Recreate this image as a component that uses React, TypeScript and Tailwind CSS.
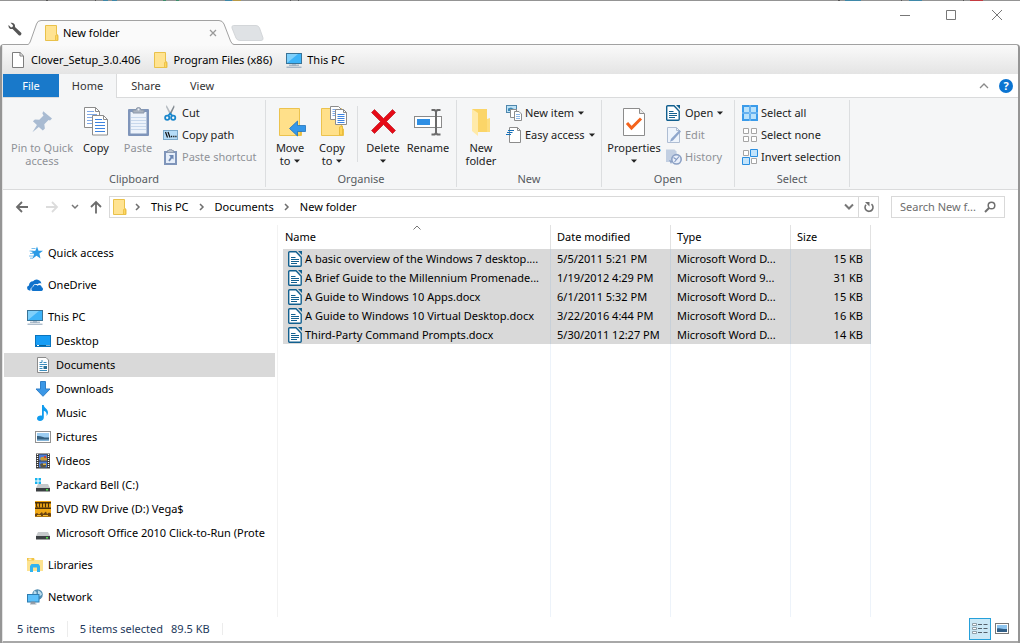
import React from "react";

type IconProps = { className?: string };

/* ---------- shared shapes ---------- */

const FolderIcon = ({ className = "h-4 w-3.5" }: IconProps) => (
  <svg viewBox="0 0 14 16" className={className} aria-hidden="true">
    <path d="M.5.5h11v9l1.500 .8v5.200H.5z" fill="#ffe391" stroke="#e9c14a" />
    <path d="M10.500 15V10.500l2-.6V15" fill="#ffd75e" stroke="#e9bd3f" strokeWidth=".8" />
  </svg>
);

const MonitorIcon = ({ className = "h-4 w-4" }: IconProps) => (
  <svg viewBox="0 0 16 16" className={className} aria-hidden="true">
    <rect x=".5" y="1.500" width="15" height="10" fill="#3db3f8" stroke="#3a7396" />
    <path d="M1 11V2h11z" fill="#7fd0fb" />
    <path d="M6 12h4v1.500H6z" fill="#b9c6d2" />
    <path d="M3 13.200h10M.5 15.200h15" stroke="#8aa0b6" />
  </svg>
);

const WriterIcon = ({ className = "h-4 w-3.5" }: IconProps) => (
  <svg viewBox="0 0 14 16" className={className} aria-hidden="true">
    <path d="M1.700.8h6.300l5.200 5.400v8.100a1 1 0 0 1-1 1H1.700a1 1 0 0 1-1-1V1.800a1 1 0 0 1 1-1z" fill="#fff" stroke="#12608f" strokeWidth="1.400" />
    <path d="M10 0H14v4z" fill="#12608f" />
    <path d="M3 6.500h4.500M3 8.500h8M3 10.500h8M3 12.500h6" stroke="#12608f" />
  </svg>
);

const BlankPage = ({ className = "h-4 w-3" }: IconProps) => (
  <svg viewBox="0 0 12 16" className={className} aria-hidden="true">
    <path d="M.5.5h7.600l3.400 3.400v11.600H.5z" fill="#fff" stroke="#7d7d7d" />
    <path d="M8 .5V4h3.500" fill="none" stroke="#7d7d7d" />
  </svg>
);

const Caret = () => (
  <svg viewBox="0 0 6 4" className="inline-block h-1 w-1.5 shrink-0" aria-hidden="true">
    <path d="M0 .5h6L3 3.700z" fill="#222" />
  </svg>
);

/* ---------- ribbon icons ---------- */

const PinIcon = () => (
  <svg viewBox="0 0 32 32" className="h-8 w-8" aria-hidden="true">
    <path d="M17.200 5.200 26 12.600l-2 1.900-1.500-.6-4.200 4.300.6 4.400-2.100 2-4-3.600-6.400 5.200 4.500-7.100-4-3.800 2-1.900 4.400.3 4.200-4.300-1.100-2z" fill="#a9bbd2" />
  </svg>
);

const CopyIcon = () => (
  <svg viewBox="0 0 32 32" className="h-8 w-8" aria-hidden="true">
    <path d="M4.500 1.500h11l4 4v16h-15z" fill="#fff" stroke="#8c8c8c" />
    <path d="M15.500 1.500v4h4" fill="none" stroke="#8c8c8c" />
    <path d="M7 5.500h7M7 8.500h10M7 11.500h10M7 14.500h10M7 17.500h10" stroke="#7fa9e8" />
    <path d="M12.500 9.500h11l4 4v15.500h-15z" fill="#fff" stroke="#8c8c8c" />
    <path d="M23.500 9.500v4h4" fill="none" stroke="#8c8c8c" />
    <path d="M15 13.500h7M15 16.500h10M15 19.500h10M15 22.500h10M15 25.500h10" stroke="#3d83e0" />
  </svg>
);

const PasteIcon = () => (
  <svg viewBox="0 0 32 32" className="h-8 w-8" aria-hidden="true">
    <rect x="6" y="3" width="21" height="27" rx="1" fill="#7f95ba" />
    <path d="M8.500 6h16v21.500h-16z" fill="#edf3fb" />
    <path d="M9 11.500h15M9 14.500h15M9 17.500h15M9 20.500h15M9 23.500h15" stroke="#c8d8ec" />
    <path d="M11 7V4h3a2.500 2.500 0 0 1 5 0h3v3z" fill="#a9b2bf" stroke="#8b98ab" />
    <circle cx="16.500" cy="3.500" r="1" fill="#eef2f7" />
  </svg>
);

const ScissorsIcon = () => (
  <svg viewBox="0 0 16 16" className="h-4 w-4" aria-hidden="true">
    <path d="M3.500 0l5 9-1.500 1L3 2z" fill="#b3b9bf" />
    <path d="M11 0l.5 2-4 8.500-1.500-1z" fill="#7f878e" />
    <circle cx="4.200" cy="12.800" r="2.100" fill="none" stroke="#1b87cc" strokeWidth="1.800" />
    <circle cx="10.200" cy="12.800" r="2.100" fill="none" stroke="#1b87cc" strokeWidth="1.800" />
    <path d="M5 10.900l2.200-2.400 2.200 2.400" fill="none" stroke="#1b87cc" strokeWidth="1.800" />
  </svg>
);

const CopyPathIcon = () => (
  <svg viewBox="0 0 16 16" className="h-4 w-4" aria-hidden="true">
    <rect x=".5" y="3.500" width="14" height="9" fill="#b5dcf8" stroke="#7ba9cb" />
    <path d="M2.500 5l2 5.500M5 5l2 5.500" stroke="#111" strokeWidth="1.200" />
    <path d="M8 9.500h1.200M10.200 9.500h1.200M12.300 9.500h1.200" stroke="#111" strokeWidth="1.300" />
  </svg>
);

const PasteShortcutIcon = () => (
  <svg viewBox="0 0 16 16" className="h-4 w-4" aria-hidden="true">
    <path d="M1 2h13v14H1z" fill="#7f95ba" />
    <path d="M3 4h9v10H3z" fill="#e6eef9" />
    <path d="M4.500 3.500v-2H6a1.500 1.500 0 0 1 3 0h1.500v2z" fill="#b7c0cd" stroke="#8b98ab" strokeWidth=".8" />
    <path d="M6 6h4.500v4.500L9 9.200 6.700 12.500l-1.400-1L7.600 8z" fill="#6d88b4" />
  </svg>
);

const BigFolder = () => (
  <>
    <path d="M5.500 2.500h20v19l2 1.500v6.500h-22z" fill="#ffe08a" stroke="#ecc34e" />
    <path d="M23.500 29V21l3-1v9z" fill="#ffd55a" stroke="#e9bd3f" />
  </>
);

const MoveToIcon = () => (
  <svg viewBox="0 0 32 32" className="h-8 w-8" aria-hidden="true">
    <BigFolder />
    <path d="M15.500 22.500l8-7.500v4.500h8v6h-8V30z" fill="#3497ea" stroke="#2273bb" strokeWidth=".8" />
  </svg>
);

const CopyToIcon = () => (
  <svg viewBox="0 0 32 32" className="h-8 w-8" aria-hidden="true">
    <BigFolder />
    <path d="M14.500.5h8l3 3v10h-11z" fill="#fff" stroke="#8c8c8c" />
    <path d="M16.500 3.500h5M16.500 5.500h7M16.500 7.500h7M16.500 9.500h7" stroke="#7fa9e8" />
    <path d="M19.500 3.500h8l3 3v12h-11z" fill="#fff" stroke="#8c8c8c" />
    <path d="M27.500 3.500v3h3" fill="none" stroke="#8c8c8c" />
    <path d="M21.500 8.500h7M21.500 10.500h7M21.500 12.500h7M21.500 14.500h7M21.500 16.500h7" stroke="#3d83e0" />
  </svg>
);

const DeleteIcon = () => (
  <svg viewBox="0 0 32 32" className="h-8 w-8" aria-hidden="true">
    <path d="M4.500 6.500l3-3 9 9 9-9 3 3-9 9 9 9-3 3-9-9-9 9-3-3 9-9z" fill="#e60b17" stroke="#b60a12" strokeWidth=".6" />
  </svg>
);

const RenameIcon = () => (
  <svg viewBox="0 0 32 32" className="h-8 w-8" aria-hidden="true">
    <rect x="2.500" y="10.500" width="27" height="11" fill="#fff" stroke="#8a8a8a" />
    <rect x="5" y="13" width="13" height="6" fill="#2f8fe4" />
    <path d="M19.500 4h3.200l1.300 1.500L25.300 4h3.200M24 5v23M19.500 28.500h3.200L24 27l1.300 1.500h3.200" fill="none" stroke="#6b6b6b" strokeWidth="2" />
  </svg>
);

const NewFolderIcon = () => (
  <svg viewBox="0 0 32 32" className="h-8 w-8" aria-hidden="true">
    <path d="M7 3h15v10l3 2v11H13z" fill="#fbd568" />
    <path d="M7 3l6 4v23l-6-5z" fill="#ffeaa9" />
    <path d="M22 13l3-1v14h-3z" fill="#fddd7e" />
  </svg>
);

const NewItemIcon = () => (
  <svg viewBox="0 0 16 16" className="h-4 w-4" aria-hidden="true">
    <rect x=".5" y=".5" width="10" height="7" fill="#bde2f6" stroke="#4f87ad" />
    <path d="M2 6V3.500l3-1 4 2V6z" fill="#3c88b5" />
    <path d="M4.500 4.500h6v8h-6z" fill="#fff" stroke="#8c8c8c" />
    <path d="M8.500 6.500h4.500l2.500 2.500v6.500h-7z" fill="#fff" stroke="#8c8c8c" />
    <path d="M10 9.500h4M10 11.500h4M10 13.500h4" stroke="#8db7e6" />
  </svg>
);

const EasyAccessIcon = () => (
  <svg viewBox="0 0 16 16" className="h-4 w-4" aria-hidden="true">
    <path d="M3.500.5h8l3 3v12h-11z" fill="#fff" stroke="#8c8c8c" />
    <path d="M11.500.5v3h3" fill="none" stroke="#8c8c8c" />
    <path d="M2 3.500h6M1 5.500h5.500M0 7.500h5" stroke="#1670b8" strokeWidth="1.100" />
  </svg>
);

const PropertiesIcon = () => (
  <svg viewBox="0 0 32 32" className="h-8 w-8" aria-hidden="true">
    <path d="M5.500 2.500h16l5 5v22h-21z" fill="#fff" stroke="#8c8c8c" />
    <path d="M21.500 2.500v5h5" fill="#e8e8e8" stroke="#8c8c8c" />
    <path d="M9 17l4.500 5L23 12.500" fill="none" stroke="#f4631c" strokeWidth="3" />
  </svg>
);

const EditIcon = () => (
  <svg viewBox="0 0 16 16" className="h-4 w-4" aria-hidden="true">
    <path d="M1.500.5h9l3 3v12h-12z" fill="#eef4fc" stroke="#aebdd3" />
    <path d="M10.500.5v3h3" fill="none" stroke="#aebdd3" />
    <path d="M13.500 3l1.500 1.500-8 9-3 1.200 1.100-3z" fill="#8ea6cc" />
  </svg>
);

const HistoryIcon = () => (
  <svg viewBox="0 0 16 16" className="h-4 w-4" aria-hidden="true">
    <path d="M0 .5h8.500l2 2v10.500H0z" fill="#c2cfe2" />
    <circle cx="10.500" cy="10.300" r="4.700" fill="#e9effa" stroke="#8ba0c4" strokeWidth="1.600" />
    <path d="M7.500 8.500l3 2 2.500-3M10.500 10.500l-2 2.500" fill="none" stroke="#8098c0" strokeWidth="1.100" />
    <path d="M3 11l3.500 1-1.500 3z" fill="#8ba0c4" />
  </svg>
);

const SelectAllIcon = () => (
  <svg viewBox="0 0 16 16" className="h-4 w-4" aria-hidden="true">
    <rect width="16" height="16" fill="#3a9bea" />
    <path d="M2 2h5v5H2zM9 2h5v5H9zM2 9h5v5H2zM9 9h5v5H9z" fill="#b9e2fb" />
    <path d="M8 0v16M0 8h16" stroke="#e8f5fe" strokeWidth=".5" />
  </svg>
);
const SelectNoneIcon = () => (
  <svg viewBox="0 0 16 16" className="h-4 w-4" aria-hidden="true">
    <path d="M1.500 1.500h5v5h-5zM9.500 1.500h5v5h-5zM1.500 9.500h5v5h-5zM9.500 9.500h5v5h-5z" fill="#fff" stroke="#a5a5a5" />
  </svg>
);
const InvertIcon = () => (
  <svg viewBox="0 0 16 16" className="h-4 w-4" aria-hidden="true">
    <path d="M1.500 1.500h5v5h-5zM9.500 9.500h5v5h-5z" fill="#fff" stroke="#a5a5a5" />
    <path d="M8.500.5h7v7h-7zM.5 8.500h7v7h-7z" fill="#c3e4fb" stroke="#2b8fe0" />
  </svg>
);

/* ---------- sidebar icons ---------- */

const QuickIcon = () => (
  <svg viewBox="0 0 16 16" className="h-4 w-4" aria-hidden="true">
    <path d="M10 1.500l1.500 4.200 4.500.1-3.600 2.700L13.500 13.500 9.500 10.800 5.500 13.800 7 9 4 6.200l4.400-.4z" fill="#2b9be6" />
    <path d="M4.500 3.500h4M2.500 6h4M3 8.500h4M2 11h4M3 13.200h3" stroke="#69b7ea" strokeWidth=".9" />
  </svg>
);
const OneDriveIcon = () => (
  <svg viewBox="0 0 16 16" className="h-4 w-4" aria-hidden="true">
    <path d="M3.600 13.500H2.400A2.600 2.600 0 0 1 2 8.400a4 4 0 0 1 4-4.200 5 5 0 0 1 8.500 2.300c-1.500-.6-3-.3-4 .8-2.200-1-4.700.2-5 2.600-1.700.4-2.400 2.100-1.900 3.600z" fill="#0f72cc" />
    <path d="M6.500 14a2 2 0 0 1-.3-4C6.400 8 9 7 10.500 8.700c1.500-1.600 4.100-.7 4.200 1.500 1.800.5 1.700 3.300-.2 3.800z" fill="#0f72cc" />
  </svg>
);
const DesktopIcon = () => (
  <svg viewBox="0 0 16 16" className="h-4 w-4" aria-hidden="true">
    <rect x=".5" y="2.500" width="15" height="11" fill="#179df5" stroke="#0a74bd" />
    <path d="M1 12.500h14" stroke="#066097" />
    <path d="M2 12.500h2M11.500 12.500h1M13.500 12.500h1" stroke="#fff" />
  </svg>
);
const DocumentsIcon = () => (
  <svg viewBox="0 0 16 16" className="h-4 w-4" aria-hidden="true">
    <path d="M2.500.5h8.500l2.500 2.500v12.500h-11z" fill="#fff" stroke="#8b8b8b" />
    <path d="M4.500 5.500h2.500V3M8.500 5.500h3M4.500 7.500h7.500M4.500 9.500h3M4.500 11.500h3M4.500 13.500h7.500" fill="none" stroke="#3c8dbd" />
    <path d="M8.500 9h3.500v3H8.500z" fill="#2b6f95" />
  </svg>
);
const DownloadsIcon = () => (
  <svg viewBox="0 0 16 16" className="h-4 w-4" aria-hidden="true">
    <path d="M5.500.5h5v7.500H15L8 15.300 1 8h4.500z" fill="#3b97e6" stroke="#2f7fc8" />
  </svg>
);
const MusicIcon = () => (
  <svg viewBox="0 0 16 16" className="h-4 w-4" aria-hidden="true">
    <path d="M7 0h1.700c.3 3 4.300 3.600 4.300 7.600 0 1.600-.8 2.700-1.500 3.400.6-2.500-.3-4.400-2.700-5.300V12.500c0 2-1.700 3.500-3.800 3.500C3.300 16 2 15 2 13.500 2 11.500 4.500 10 7 10.700z" fill="#109bee" />
  </svg>
);
const PicturesIcon = () => (
  <svg viewBox="0 0 16 16" className="h-4 w-4" aria-hidden="true">
    <rect x=".5" y="2.500" width="15" height="11" fill="#fff" stroke="#929292" />
    <path d="M2 4h12v8H2z" fill="#9ccdf2" />
    <path d="M2 7c4-.5 6 2 12 1.500V11H2z" fill="#356080" />
    <path d="M2 10.500h12V12H2z" fill="#86b6da" />
  </svg>
);
const VideosIcon = () => (
  <svg viewBox="0 0 16 16" className="h-4 w-4" aria-hidden="true">
    <rect x="1" y=".5" width="14" height="15" fill="#3b3b3b" />
    <path d="M2.500 1v14M13.500 1v14" stroke="#fff" strokeWidth="1.300" strokeDasharray="1 1" />
    <path d="M4 1.500h8v6H4zM4 8.500h8v6H4z" fill="#4a7cd6" />
    <path d="M5 5.500l1.500-1.500h4l1.500 1v2.500H6z" fill="#c79b36" />
    <path d="M5 11.500l2-1.500 2 1.500 2-1.500v3l-1 1.500H6z" fill="#5c5540" />
    <path d="M9 3h2v2H9z" fill="#c8443c" />
    <path d="M8 10.500h3v1.500H8z" fill="#e5b53c" />
  </svg>
);
const Drive = ({ windows = false }: { windows?: boolean }) => (
  <svg viewBox="0 0 16 16" className="h-4 w-4" aria-hidden="true">
    <path d="M3 7h10l2 4H1z" fill="#c6c9cb" />
    <path d="M1 11h14v3.500H1z" fill="#3c4043" />
    <path d="M11 12.700h2" stroke="#52e04c" strokeWidth="1.500" />
    {windows && <path d="M0 1h2.500v2.500H0zM3.500 1H6v2.500H3.500zM0 4.500h2.500V7H0zM3.500 4.500H6V7H3.500z" fill="#19b4ee" />}
  </svg>
);
const WindowsDriveIcon = () => <Drive windows />;
const VegasIcon = () => (
  <svg viewBox="0 0 16 16" className="h-4 w-4" aria-hidden="true">
    <rect width="16" height="16" fill="#f0a816" />
    <path d="M0 1h16v1.500H0zM0 6.500h16V8H0z" fill="#4a2f08" />
    <path d="M1.500 2v3l.8 1.500M4.500 2v4.500M7.500 2v4.500M10.500 2v4.500M13.500 2v4.500" stroke="#4a2f08" strokeWidth="1.200" />
    <path d="M0 13l2-1 2 1.500 3-2.500 1 2 3-2.500 1 2.500 2-1.500 2 1v3H0z" fill="#6b4310" />
    <path d="M2 14.500h4M8 14.500h5" stroke="#f6bd2c" />
  </svg>
);
const LibrariesIcon = () => (
  <svg viewBox="0 0 16 16" className="h-4 w-4" aria-hidden="true">
    <path d="M0 1h7l1.500 2H16v11H0z" fill="#fde391" />
    <path d="M0 1h7v2.500H0z" fill="#f2c443" />
    <path d="M1.500 2.200h3" stroke="#fff" />
    <path d="M3 15V9l1.500-2h7L13 9v6h-3v-4.500H6V15z" fill="#31b3f0" />
  </svg>
);
const NetworkIcon = () => (
  <svg viewBox="0 0 16 16" className="h-4 w-4" aria-hidden="true">
    <circle cx="10.500" cy="5.500" r="5.300" fill="#538fb3" />
    <path d="M7 2c2 0 3 1 2.500 3S8 8 6 7zM11 1.500c2 .5 3.500 2 4 4l-2.500 2L11 5z" fill="#b9ddef" />
    <rect x=".5" y="5.500" width="11.500" height="7.500" fill="#5cc0fa" stroke="#2d7cb0" />
    <path d="M4 13h4v1.500H4zM3 15h6.500" stroke="#8f9aa5" fill="#8f9aa5" strokeWidth=".8" />
  </svg>
);

/* ---------- ribbon parts ---------- */

function LargeButton({ icon, lines, caret, width, disabled }: { icon: React.ReactNode; lines: string[]; caret?: boolean; width: string; disabled?: boolean }) {
  const last = lines.length - 1;
  const ownRow = caret && lines.length === 1;
  return (
    <button type="button" disabled={disabled} className={`flex shrink-0 flex-col items-center pt-1 leading-[13px] ${width} ${disabled ? "text-[#8f9298]" : "text-[#222]"}`}>
      {icon}
      <span className="mt-[3px] flex flex-col items-center whitespace-nowrap">
        {lines.map((line, i) => (
          <span key={line} className="flex items-center gap-1">
            {line}
            {caret && !ownRow && i === last && <Caret />}
          </span>
        ))}
        {ownRow && <span className="flex h-[13px] items-center"><Caret /></span>}
      </span>
    </button>
  );
}

function SmallButton({ icon, label, caret, disabled }: { icon: React.ReactNode; label: string; caret?: boolean; disabled?: boolean }) {
  return (
    <button type="button" disabled={disabled} className={`flex h-[22px] items-center whitespace-nowrap ${disabled ? "text-[#8f9298]" : "text-[#222]"}`}>
      <span className="flex w-[19px] shrink-0">{icon}</span>
      <span className="mr-1">{label}</span>
      {caret && <Caret />}
    </button>
  );
}

function Group({ label, width, pad, children }: { label: string; width: string; pad: string; children: React.ReactNode }) {
  return (
    <section aria-label={label} className={`mt-0.5 mb-0.5 flex shrink-0 flex-col border-r border-[#dcdee0] ${width}`}>
      <div className={`flex h-[70px] items-start pt-0.5 ${pad}`}>{children}</div>
      <h2 className="mt-0.5 text-center leading-[17px] text-[#555a60]">{label}</h2>
    </section>
  );
}

/* ---------- data ---------- */

const places: { label: string; icon: React.FC; child?: boolean; gap?: boolean; selected?: boolean }[] = [
  { label: "Quick access", icon: QuickIcon },
  { label: "OneDrive", icon: OneDriveIcon, gap: true },
  { label: "This PC", icon: MonitorIcon, gap: true },
  { label: "Desktop", icon: DesktopIcon, child: true },
  { label: "Documents", icon: DocumentsIcon, child: true, selected: true },
  { label: "Downloads", icon: DownloadsIcon, child: true },
  { label: "Music", icon: MusicIcon, child: true },
  { label: "Pictures", icon: PicturesIcon, child: true },
  { label: "Videos", icon: VideosIcon, child: true },
  { label: "Packard Bell (C:)", icon: WindowsDriveIcon, child: true },
  { label: "DVD RW Drive (D:) Vega$", icon: VegasIcon, child: true },
  { label: "Microsoft Office 2010 Click-to-Run (Prote", icon: () => <Drive />, child: true },
  { label: "Libraries", icon: LibrariesIcon, gap: true },
  { label: "Network", icon: NetworkIcon, gap: true },
];

const files = [
  ["A basic overview of the Windows 7 desktop....", "5/5/2011 5:21 PM", "Microsoft Word D...", "15 KB"],
  ["A Brief Guide to the Millennium Promenade...", "1/19/2012 4:29 PM", "Microsoft Word 9...", "31 KB"],
  ["A Guide to Windows 10 Apps.docx", "6/1/2011 5:32 PM", "Microsoft Word D...", "15 KB"],
  ["A Guide to Windows 10 Virtual Desktop.docx", "3/22/2016 4:44 PM", "Microsoft Word D...", "16 KB"],
  ["Third-Party Command Prompts.docx", "5/30/2011 12:27 PM", "Microsoft Word D...", "14 KB"],
];

const Chevron = () => (
  <svg viewBox="0 0 6 8" className="h-2 w-1.5 shrink-0" aria-hidden="true">
    <path d="M1 1l3 3-3 3" fill="none" stroke="#6f6f6f" strokeWidth="1.500" />
  </svg>
);

/* ---------- page sections ---------- */

const TitleBar = () => (
  <header className="relative z-10 -mb-px flex h-[45px] items-end pl-2">
    <svg viewBox="0 0 1020 1" preserveAspectRatio="none" className="absolute inset-x-0 top-0 h-px w-full" aria-hidden="true">
      <rect width="1020" height="1" fill="#949494" />
      <path d="M46 0h2v1h-2zM95 0h1v1h-1zM290 0h1v1h-1zM298 0h1v1h-1zM838 0h2v1h-2zM901 0h1v1h-1zM963 0h1v1h-1z" fill="#555" />
      <path d="M103 0h5v1h-5zM112 0h5v1h-5zM225 0h7v1h-7zM845 0h16v1h-16zM909 0h13v1h-13z" fill="#3f88a8" />
      <path d="M163 0h3v1h-3zM176 0h3v1h-3z" fill="#3d8f6c" />
      <path d="M233 0h8v1h-8z" fill="#b99a45" />
      <path d="M970 0h13v1h-13z" fill="#c43a40" />
    </svg>
    <button type="button" aria-label="Options" className="mb-[9px]">
      <svg viewBox="0 0 14 14" className="h-3.5 w-3.5" aria-hidden="true">
        <path d="M2.500.8 5 3.200 4.600 5 3 5.400.6 3C0 5.500 2 7.600 4.600 7L10.500 12.900a1.600 1.600 0 0 0 2.400-2.300L7 5C7.600 2.200 5.200 0 2.500.8z" fill="#555" />
      </svg>
    </button>
    <div className="relative ml-2 flex h-[25px] w-[204px] items-center pr-[17px] pl-[15px]">
      <svg viewBox="0 0 204 25" preserveAspectRatio="none" className="absolute inset-0 h-full w-full overflow-visible" aria-hidden="true">
        <path d="M-2 24.500Q-.5 24 .5 21L6.500 4Q7.500 .5 11 .5H189Q192.500 .5 194 4L200.500 21Q202 24.500 204 24.500V25H-2z" fill="#fafafa" />
        <path d="M-2 24.500Q-.5 24 .5 21L6.500 4Q7.500 .5 11 .5H189Q192.500 .5 194 4L200.500 21Q202 24.500 204 24.500" fill="none" stroke="#a2a2a2" />
      </svg>
      <span className="relative flex flex-1 items-center text-black">
        <FolderIcon />
        <span className="ml-1 flex-1">New folder</span>
        <button type="button" aria-label="Close tab">
          <svg viewBox="0 0 8 8" className="h-2 w-2" aria-hidden="true"><path d="M1 1l6 6M7 1L1 7" stroke="#9a9a9a" strokeWidth="1.300" /></svg>
        </button>
      </span>
    </div>
    <button type="button" aria-label="New tab" className="mb-1 -ml-[3px]">
      <svg viewBox="0 0 33 16" className="h-4 w-[33px]" aria-hidden="true">
        <path d="M2.500.5H25Q27.500.5 28.500 3L32 13Q32.500 15.500 30 15.500H9Q6 15.500 5 13L1 3Q.5.500 2.500.5z" fill="#dfe2e5" stroke="#d3d6d9" />
      </svg>
    </button>
    <div className="ml-auto flex items-center gap-[34px] self-start pt-[9px] pr-[17px]">
      <button type="button" aria-label="Minimise" className="h-3 w-3"><svg viewBox="0 0 12 12" aria-hidden="true"><path d="M1 6.500h10" stroke="#777" /></svg></button>
      <button type="button" aria-label="Maximise" className="h-3 w-3"><svg viewBox="0 0 12 12" aria-hidden="true"><path d="M1.500 1.500h9v9h-9z" fill="none" stroke="#777" /></svg></button>
      <button type="button" aria-label="Close" className="h-3 w-3"><svg viewBox="0 0 12 12" aria-hidden="true"><path d="M1 1l10 10M11 1L1 11" stroke="#777" /></svg></button>
    </div>
  </header>
);

const Ribbon = () => (
  <>
    <nav aria-label="Ribbon tabs" className="flex h-6 items-stretch border-b border-[#dadbdc] bg-white text-[#333]">
      <button type="button" className="w-14 bg-[#1979ca] text-white">File</button>
      <button type="button" className="-mb-px w-[58px] border-r border-[#dadbdc] bg-[#f5f6f7]">Home</button>
      <button type="button" className="w-[58px]">Share</button>
      <button type="button" className="w-[54px]">View</button>
      <div className="ml-auto flex items-center gap-2.5 pr-[5px]">
        <button type="button" aria-label="Collapse ribbon">
          <svg viewBox="0 0 10 6" className="h-1.5 w-2.5" aria-hidden="true"><path d="M1 5l4-4 4 4" fill="none" stroke="#8a8a8a" strokeWidth="1.300" /></svg>
        </button>
        <button type="button" aria-label="Help" className="flex h-3.5 w-3.5 items-center justify-center rounded-full bg-[#0b74d1] leading-none font-bold text-white">?</button>
      </div>
    </nav>
    <div className="flex h-[92px] overflow-hidden border-b border-[#dadbdc] bg-[#f5f6f7]">
      <Group label="Clipboard" width="w-[263px]" pad="pl-1.5">
        <LargeButton icon={<PinIcon />} lines={["Pin to Quick", "access"]} width="w-[66px]" disabled />
        <LargeButton icon={<CopyIcon />} lines={["Copy"]} width="w-[42px]" />
        <LargeButton icon={<PasteIcon />} lines={["Paste"]} width="w-[42px]" disabled />
        <div className="pl-1">
          <SmallButton icon={<ScissorsIcon />} label="Cut" />
          <SmallButton icon={<CopyPathIcon />} label="Copy path" />
          <SmallButton icon={<PasteShortcutIcon />} label="Paste shortcut" disabled />
        </div>
      </Group>
      <Group label="Organise" width="w-[191px]" pad="pl-[3px]">
        <LargeButton icon={<MoveToIcon />} lines={["Move", "to"]} caret width="w-[42px]" />
        <LargeButton icon={<CopyToIcon />} lines={["Copy", "to"]} caret width="w-[42px]" />
        <div className="mx-1 mt-1 h-14 border-l border-[#dcdee0]" />
        <LargeButton icon={<DeleteIcon />} lines={["Delete"]} caret width="w-[42px]" />
        <LargeButton icon={<RenameIcon />} lines={["Rename"]} width="w-[48px]" />
      </Group>
      <Group label="New" width="w-[145px]" pad="pl-[3px]">
        <LargeButton icon={<NewFolderIcon />} lines={["New", "folder"]} width="w-[42px]" />
        <div className="pl-1">
          <SmallButton icon={<NewItemIcon />} label="New item" caret />
          <SmallButton icon={<EasyAccessIcon />} label="Easy access" caret />
        </div>
      </Group>
      <Group label="Open" width="w-[133px]" pad="pl-1">
        <LargeButton icon={<PropertiesIcon />} lines={["Properties"]} caret width="w-[56px]" />
        <div className="pl-1">
          <SmallButton icon={<WriterIcon />} label="Open" caret />
          <SmallButton icon={<EditIcon />} label="Edit" disabled />
          <SmallButton icon={<HistoryIcon />} label="History" disabled />
        </div>
      </Group>
      <Group label="Select" width="w-[115px]" pad="pl-[7px]">
        <div>
          <SmallButton icon={<SelectAllIcon />} label="Select all" />
          <SmallButton icon={<SelectNoneIcon />} label="Select none" />
          <SmallButton icon={<InvertIcon />} label="Invert selection" />
        </div>
      </Group>
    </div>
  </>
);

const AddressBar = () => (
  <div className="flex items-center pt-1.5 pr-[13px] pl-3 text-black">
    <button type="button" aria-label="Back"><svg viewBox="0 0 14 14" className="h-3.5 w-3.5" aria-hidden="true"><path d="M13 7H2M7 2L2 7l5 5" fill="none" stroke="#6c6c6c" strokeWidth="1.800" /></svg></button>
    <button type="button" aria-label="Forward" className="ml-4"><svg viewBox="0 0 14 14" className="h-3.5 w-3.5" aria-hidden="true"><path d="M1 7h11M7 2l5 5-5 5" fill="none" stroke="#dcdcdc" strokeWidth="1.800" /></svg></button>
    <button type="button" aria-label="Recent locations" className="ml-3"><svg viewBox="0 0 8 6" className="h-1.5 w-2" aria-hidden="true"><path d="M1 1l3 3 3-3" fill="none" stroke="#777" strokeWidth="1.500" /></svg></button>
    <button type="button" aria-label="Up" className="ml-2.5"><svg viewBox="0 0 14 14" className="h-3.5 w-3.5" aria-hidden="true"><path d="M7 13.500V2M2 7l5-5 5 5" fill="none" stroke="#6c6c6c" strokeWidth="1.800" /></svg></button>
    <nav aria-label="Breadcrumb" className="ml-1.5 flex h-[22px] flex-1 items-center border border-[#d9d9d9] pl-[3px]">
      <FolderIcon />
      <span className="ml-2"><Chevron /></span>
      <a href="#this-pc" className="mx-2.5">This PC</a>
      <Chevron />
      <a href="#documents" className="mx-2.5">Documents</a>
      <Chevron />
      <a href="#new-folder" className="mx-2.5">New folder</a>
      <button type="button" aria-label="Previous locations" className="mr-1 ml-auto"><svg viewBox="0 0 10 8" className="h-2 w-2.5" aria-hidden="true"><path d="M1 1.500l4 4 4-4" fill="none" stroke="#777" strokeWidth="2" /></svg></button>
      <button type="button" aria-label="Refresh" className="flex h-full w-5 items-center justify-center border-l border-[#d9d9d9]">
        <svg viewBox="0 0 12 12" className="h-3 w-3" aria-hidden="true"><path d="M8.500 3.200a4 4 0 1 1-5.500.5" fill="none" stroke="#707070" strokeWidth="1.600" /><path d="M2 1h4.500v4.500z" fill="#707070" /></svg>
      </button>
    </nav>
    <label className="ml-3 flex h-[22px] w-[114px] items-center border border-[#d9d9d9] pr-2 pl-2">
      <input aria-label="Search New folder" placeholder="Search New f..." className="w-0 flex-1 bg-transparent outline-none placeholder:text-[#6d6d6d]" />
      <svg viewBox="0 0 12 12" className="h-3 w-3 shrink-0" aria-hidden="true"><circle cx="7.500" cy="4.500" r="3.300" fill="none" stroke="#6f6f6f" strokeWidth="1.500" /><path d="M5 7L1 11" stroke="#6f6f6f" strokeWidth="2" /></svg>
    </label>
  </div>
);

const Sidebar = () => (
  <nav aria-label="Folders" className="w-[275px] shrink-0 border-r border-[#f2f2f2] pt-4 pr-0.5 pl-px">
    <ul>
      {places.map(({ label, icon: Icon, child, gap, selected }) => (
        <li key={label} className={gap ? "mt-2" : ""}>
          <a href="#place" className={`flex h-6 items-center overflow-hidden whitespace-nowrap text-black ${child ? "pl-[31px]" : "pl-[23px]"} ${selected ? "bg-[#d9d9d9]" : ""}`}>
            <span className="mr-[5px] shrink-0"><Icon /></span>
            {label}
          </a>
        </li>
      ))}
    </ul>
  </nav>
);

const cellLine = "border-r border-[#edf3fa]";
const FileList = () => (
  <main className="flex min-w-0 flex-1 pl-[5px]">
    <table className="w-[588px] table-fixed border-separate border-spacing-0 text-left whitespace-nowrap text-black">
      <colgroup>
        <col className="w-[268px]" />
        <col className="w-[120px]" />
        <col className="w-[120px]" />
        <col className="w-[80px]" />
      </colgroup>
      <thead>
        <tr className="h-6">
          <th className="relative border-r border-[#e2e2e2] pl-0.5 font-normal" aria-sort="ascending">
            Name
            <svg viewBox="0 0 8 5" className="absolute top-0 left-1/2 h-[5px] w-2 -translate-x-1/2" aria-hidden="true"><path d="M.5 4.500L4 1l3.500 3.500" fill="none" stroke="#777" /></svg>
          </th>
          <th className="border-r border-[#e2e2e2] pl-1.5 font-normal">Date modified</th>
          <th className="border-r border-[#e2e2e2] pl-1.5 font-normal">Type</th>
          <th className="border-r border-[#e2e2e2] pl-1.5 font-normal">Size</th>
        </tr>
      </thead>
      <tbody>
        {files.map(([name, date, type, size]) => (
          <tr key={name} className="h-[19px] bg-[#d9d9d9]">
            <td className="overflow-hidden border-r border-[#c8d0d8] pl-[5px]">
              <span className="flex items-center gap-[3px]"><WriterIcon className="h-4 w-3.5 shrink-0" />{name}</span>
            </td>
            <td className="overflow-hidden border-r border-[#c8d0d8] pl-1.5">{date}</td>
            <td className="overflow-hidden border-r border-[#c8d0d8] pl-1.5">{type}</td>
            <td className="border-r border-[#c8d0d8] pr-[7px] text-right">{size}</td>
          </tr>
        ))}
        <tr aria-hidden="true">
          <td className={cellLine} /><td className={cellLine} /><td className={cellLine} /><td className={cellLine} />
        </tr>
      </tbody>
    </table>
  </main>
);

const StatusBar = () => (
  <footer className="flex h-6 items-center pr-2 pl-3.5 text-[#1e395b]">
    <span>5 items</span>
    <span className="ml-3 flex items-center border-l border-[#ececec] pl-3">5 items selected<span className="ml-2">89.5 KB</span></span>
    <span className="ml-3 h-3 border-l border-[#ececec]" />
    <div className="ml-auto flex items-center gap-1">
      <button type="button" aria-label="Details view" className="flex h-[22px] w-[22px] items-center justify-center border border-[#26a0da] bg-[#cbe8f6]">
        <svg viewBox="0 0 16 14" className="h-3.5 w-4" aria-hidden="true">
          <path d="M.5 1.500h4v2h-4zM.5 5.500h4v2h-4zM.5 9.500h4v2h-4z" fill="#fff" stroke="#7b8a96" strokeWidth=".8" />
          <path d="M6 2.500h4M11.500 2.500h4M6 6.500h4M11.500 6.500h4M6 10.500h4M11.500 10.500h4" stroke="#55616b" />
        </svg>
      </button>
      <button type="button" aria-label="Thumbnail view" className="mr-px">
        <svg viewBox="0 0 14 12" className="h-3 w-3.5" aria-hidden="true">
          <rect x=".5" y=".5" width="13" height="10" fill="#fff" stroke="#777" />
          <path d="M2 2h10v7H2z" fill="#8dc4ee" /><path d="M2 5.500c3-1 6 1 10 .5v3H2z" fill="#2f5d86" />
        </svg>
      </button>
    </div>
  </footer>
);

export default function App() {
  return (
    <div className="flex min-h-screen flex-col bg-white font-['Noto_Sans','Open_Sans',sans-serif] text-[11px] leading-4">
      <TitleBar />
      <div className="flex flex-1 flex-col rounded-t-[4px] border-t border-r-2 border-l-2 border-t-[#a2a2a2] border-r-[#959595] border-l-[#959595]">
        <div className="flex flex-1 flex-col border-b-2 border-l border-b-[#a8a8a8] border-l-[#e4e4e4]">
          <nav aria-label="Bookmarks" className="flex h-[29px] items-center rounded-tr-[4px] bg-linear-to-b from-[#fafafa] to-[#e4e4e4] pl-[9px] text-black">
            <a href="#clover" className="flex items-center gap-[7px]"><BlankPage />Clover_Setup_3.0.406</a>
            <a href="#program-files" className="ml-3.5 flex items-center gap-[5px]"><FolderIcon />Program Files (x86)</a>
            <a href="#this-pc" className="ml-3.5 flex items-center gap-[5px]"><MonitorIcon />This PC</a>
          </nav>
          <Ribbon />
          <AddressBar />
          <div className="mt-[7px] flex flex-1 items-stretch">
            <Sidebar />
            <FileList />
          </div>
          <StatusBar />
        </div>
      </div>
    </div>
  );
}
